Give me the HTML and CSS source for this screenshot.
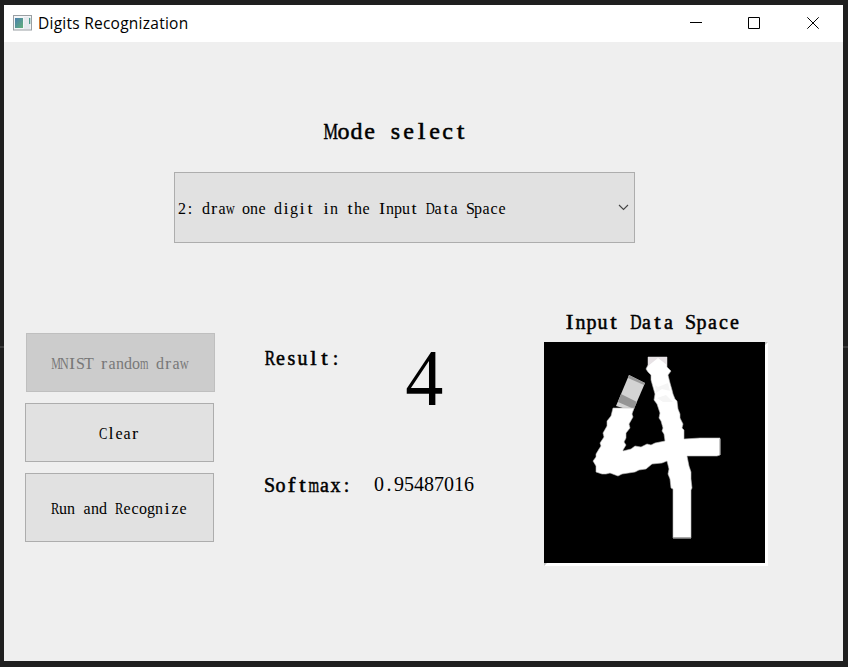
FILE: index.html
```html
<!DOCTYPE html>
<html lang="en">
<head>
<meta charset="utf-8">
<title>Digits Recognization</title>
<link rel="stylesheet" href="styles.css">
</head>
<body>
<div class="window">
  <header class="titlebar">
    <svg class="app-icon" width="19" height="16" viewBox="0 0 19 16">
      <defs><linearGradient id="g" x1="0" y1="0" x2="1" y2="1"><stop offset="0" stop-color="#4a7fae"/><stop offset="1" stop-color="#62b07a"/></linearGradient></defs>
      <rect x=".5" y=".5" width="18" height="14.5" fill="#f3f5f7" stroke="#9a9fa3"/>
      <rect x="2" y="3" width="8" height="10" fill="url(#g)"/>
      <rect x="11" y="2" width="6" height="12" fill="#e6eaee"/>
      <rect x="16" y="3" width="1.3" height="6" fill="#4f9a8c"/>
    </svg>
    <span class="caption">Digits Recognization</span>
    <svg class="controls" width="131" height="14" viewBox="0 0 131 14" fill="none" stroke="#000">
      <path d="M0 6.500H12M58.500 1.500H69.500V12.500H58.500ZM117.300 1.300L128.700 12.700M128.700 1.300L117.300 12.700"/>
    </svg>
  </header>
  <main>
    <h1 class="cells">Mode select</h1>
    <div class="combo">
      <span class="cells">2: draw one digit in the Input Data Space</span>
      <svg width="11" height="7" viewBox="0 0 11 7" fill="none" stroke="#444" stroke-width="1.1"><path d="M1 1L5.500 5.500L10 1"/></svg>
    </div>
    <div class="panels">
      <div class="actions">
        <button class="draw cells" disabled>MNIST random draw</button>
        <button class="cells">Clear</button>
        <button class="run cells">Run and Recognize</button>
      </div>
      <div class="output">
        <div class="row result"><span class="label cells">Result:</span><span class="digit">4</span></div>
        <div class="row softmax"><span class="label cells">Softmax:</span><span class="value cells">0.95487016</span></div>
      </div>
      <div class="input">
        <h2 class="label cells">Input Data Space</h2>
        <svg class="canvas" width="224" height="224" viewBox="0 0 224 224">
          <rect width="224" height="224" fill="#fff"/>
          <path d="M221 0H224L221 3ZM0 221V224L3 221Z" fill="#c4c4c4"/>
          <rect width="221" height="221" fill="#000"/>
          <path d="M85 33L101 41L89 69L72 64Z" fill="#d3d3d3"/>
          <path d="M85 33L101 41L100 43L84 36Z" fill="#999"/>
          <path d="M77 52L93 60L90 67L74 60Z" fill="#959595"/>
          <path fill="#fff" stroke="#bbb" stroke-width=".6" d="M69 66H90L88 72L89 75L85 82L86 86L82 91V96L80 100L82 103L79 108V109L87 107L91 104L97 105L103 102L107 103L111 101L121 99L120 92L118 89L119 86L117 79L115 76L116 71L114 65L113 62L110 58L111 52L109 45L107 38V33L104 30L102 27L104 23V15H123V25L127 29L124 33L126 41L128 48L129 52L131 57L133 59L134 67L136 72V76L139 82L138 86L140 88V97L156 96H176V113L173 114H143L145 124L147 130V137L148 146L147 148V196H129V147L127 146L126 137L124 132L125 127L123 119L118 121L108 122L102 127L95 128L91 130L78 132L74 134L66 131L62 132L58 132L52 130V124L49 119L52 115V112L55 107L57 104L56 101L60 95L59 91L63 84V79L67 74Z"/>
          <path d="M104 15H123V23L114 16L104 24Z" fill="#e7e2e5"/>
          <path d="M111 43L114 45L124 41L126 49L118 47L112 51ZM113 56L122 53L129 60L119 60Z" fill="#f5f5f5"/>
          <path d="M129 195H147V196.500H129ZM175.500 97H176.500V113H175.500Z" fill="#aaa"/>
        </svg>
      </div>
    </div>
  </main>
</div>
<script src="cells.js"></script>
</body>
</html>
```
FILE: styles.css
```css
* { box-sizing: border-box; }
body {
  margin: 0;
  height: 667px;
  padding: 5px 5px 6px 4px;
  background: linear-gradient(#1f1f1f 346px, #3a3a3a 346px, #3a3a3a 348px, #1f1f1f 348px);
  overflow: hidden;
  color: #000;
  font-family: "Liberation Serif", serif;
}
.window { height: 656px; background: #efefef; }
.titlebar {
  display: flex;
  align-items: center;
  height: 37px;
  padding: 0 22px 1px 9px;
  background: #fff;
}
.app-icon { margin-right: 6px; }
.caption { font: 15.5px/20px "Open Sans", sans-serif; letter-spacing: .25px; }
.controls { margin-left: auto; }

/* Half-width characters: every glyph takes one cell */
.cells {
  --cell: 8px;
  font-size: 16px;
  line-height: 20px;
  white-space: pre;
  word-spacing: calc(var(--cell) - .25em);
}
.cell { display: inline-block; width: var(--cell); text-align: center; word-spacing: 0; }
.cell.narrow { transform: scaleX(1.15); }
.cell.wide, .cell.broad {
  width: calc(var(--cell) * 1.8);
  margin: 0 calc(var(--cell) * -.4);
  transform: scaleX(.68);
}
.cell.broad { transform: scaleX(.78); }

h1, h2 { margin: 0; font-weight: 400; }
h1.cells {
  --cell: 13px;
  padding: 74px 0 0 320px;
  font-size: 24px;
  line-height: 30px;
  -webkit-text-stroke: .5px #000;
}
.combo {
  display: flex;
  align-items: center;
  justify-content: space-between;
  width: 461px;
  height: 71px;
  margin: 26px 0 0 170px;
  padding: 0 5px 0 3px;
  background: #e1e1e1;
  border: 1px solid #adadad;
}
.combo .cells { padding-top: 2px; }
.panels { display: flex; margin-top: 67px; padding-left: 21px; }
.actions { width: 239px; padding-top: 23px; }
button {
  display: block;
  width: 189px;
  height: 59px;
  margin: 0 0 11px;
  padding: 2px 1px 0 0;
  background: #e1e1e1;
  border: 1px solid #adadad;
  color: #000;
  font-family: inherit;
}
.draw { margin-left: 1px; background: #ccc; border-color: #bfbfbf; color: #787878; }
.run { height: 69px; }
.output { width: 280px; padding-top: 36px; }
.row { display: flex; align-items: flex-start; }
.label.cells { --cell: 11px; font-size: 20px; line-height: 24px; -webkit-text-stroke: .5px #000; }
.result { height: 127px; }
.digit { margin: -13px 0 0 63px; font-size: 81px; line-height: 90px; transform: scaleX(.94); }
.value.cells { --cell: 10px; margin: -1px 0 0 22px; font-size: 20px; line-height: 24px; }
.input .label { margin: 0 0 8px 20px; }
.canvas { display: block; }
```
FILE: cells.js
```js
// Set each label on a fixed character grid, fitting every glyph's width to it.
document.querySelectorAll(".cells").forEach(function (label) {
  var text = label.textContent;
  label.textContent = "";
  Array.from(text).forEach(function (ch) {
    if (ch === " ") {
      label.append(ch);
      return;
    }
    var cell = document.createElement("span");
    cell.className = "cell";
    if (/[Mm]/.test(ch)) cell.classList.add("wide");
    if (/[NwDRC]/.test(ch)) cell.classList.add("broad");
    if (/[iltrfI]/.test(ch)) cell.classList.add("narrow");
    cell.textContent = ch;
    label.append(cell);
  });
});
```
